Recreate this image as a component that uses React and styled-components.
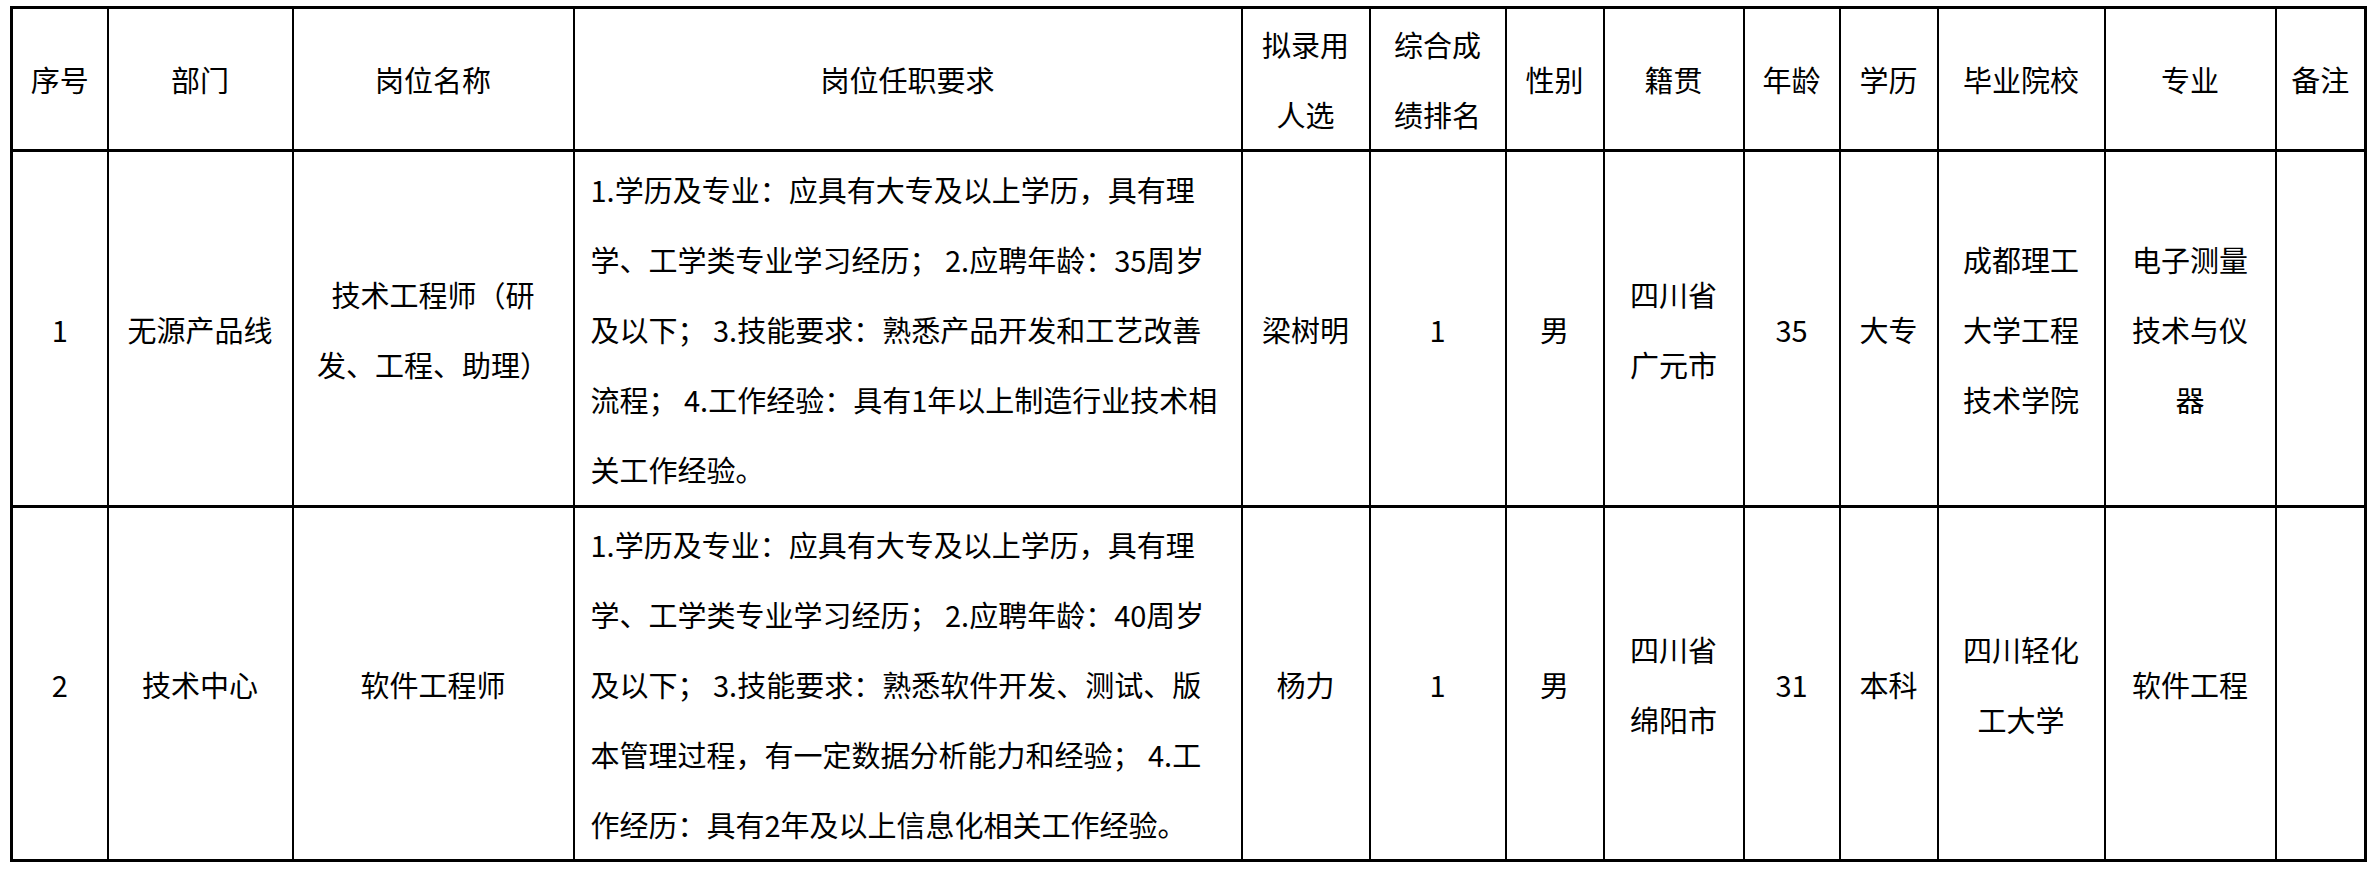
import React from 'react'
import styled, { createGlobalStyle } from 'styled-components'

const GlobalStyle = createGlobalStyle`
  body {
    margin: 0;
    background: #ffffff;
    color: #000000;
    font-family: "Noto Sans CJK SC", "Liberation Sans", sans-serif;
  }
`

const columns = [96, 185, 281, 668, 128, 136, 98, 140, 96, 98, 167, 171, 90]

const headers = [
  ['序号'],
  ['部门'],
  ['岗位名称'],
  ['岗位任职要求'],
  ['拟录用', '人选'],
  ['综合成', '绩排名'],
  ['性别'],
  ['籍贯'],
  ['年龄'],
  ['学历'],
  ['毕业院校'],
  ['专业'],
  ['备注'],
]

const rows = [
  {
    height: 356,
    cells: [
      ['1'],
      ['无源产品线'],
      ['技术工程师（研', '发、工程、助理）'],
      [
        '1.学历及专业：应具有大专及以上学历，具有理',
        '学、工学类专业学习经历； 2.应聘年龄：35周岁',
        '及以下； 3.技能要求：熟悉产品开发和工艺改善',
        '流程； 4.工作经验：具有1年以上制造行业技术相',
        '关工作经验。',
      ],
      ['梁树明'],
      ['1'],
      ['男'],
      ['四川省', '广元市'],
      ['35'],
      ['大专'],
      ['成都理工', '大学工程', '技术学院'],
      ['电子测量', '技术与仪', '器'],
      [],
    ],
  },
  {
    height: 354,
    cells: [
      ['2'],
      ['技术中心'],
      ['软件工程师'],
      [
        '1.学历及专业：应具有大专及以上学历，具有理',
        '学、工学类专业学习经历； 2.应聘年龄：40周岁',
        '及以下； 3.技能要求：熟悉软件开发、测试、版',
        '本管理过程，有一定数据分析能力和经验； 4.工',
        '作经历：具有2年及以上信息化相关工作经验。',
      ],
      ['杨力'],
      ['1'],
      ['男'],
      ['四川省', '绵阳市'],
      ['31'],
      ['本科'],
      ['四川轻化', '工大学'],
      ['软件工程'],
      [],
    ],
  },
]

const App = () => {
  return (
    <>
      <GlobalStyle />
      <Page>
        <Table>
          <colgroup>
            {columns.map((w, i) => (
              <col key={i} style={{ width: w }} />
            ))}
          </colgroup>
          <thead>
            <Row $height={142}>
              {headers.map((lines, i) => (
                <HeadCell key={i}>
                  {lines.map((l, j) => (
                    <Line key={j}>{l}</Line>
                  ))}
                </HeadCell>
              ))}
            </Row>
          </thead>
          <tbody>
            {rows.map((row, r) => (
              <Row key={r} $height={row.height}>
                {row.cells.map((lines, i) => (
                  <Cell key={i} $left={i === 3}>
                    {lines.map((l, j) => (
                      <Line key={j}>{l}</Line>
                    ))}
                  </Cell>
                ))}
              </Row>
            ))}
          </tbody>
        </Table>
      </Page>
    </>
  )
}

export default App

const Page = styled.div`
  padding: 6px 0 0 10px;
`

const Table = styled.table`
  table-layout: fixed;
  width: 2356px;
  border-collapse: collapse;
  border: 3px solid #000000;
  font-size: 29px;
`

const Row = styled.tr`
  height: ${(p) => p.$height}px;
`

const HeadCell = styled.th`
  border: 2px solid #000000;
  border-bottom-width: 3px;
  padding: 0;
  font-weight: 400;
  text-align: center;
  vertical-align: middle;
  line-height: 70px;
`

const Cell = styled.td`
  border: 2px solid #000000;
  border-bottom-width: 3px;
  padding: ${(p) => (p.$left ? '0 16px' : '0')};
  text-align: ${(p) => (p.$left ? 'left' : 'center')};
  vertical-align: middle;
  line-height: 70px;
`

const Line = styled.span`
  display: block;
  white-space: nowrap;
`
